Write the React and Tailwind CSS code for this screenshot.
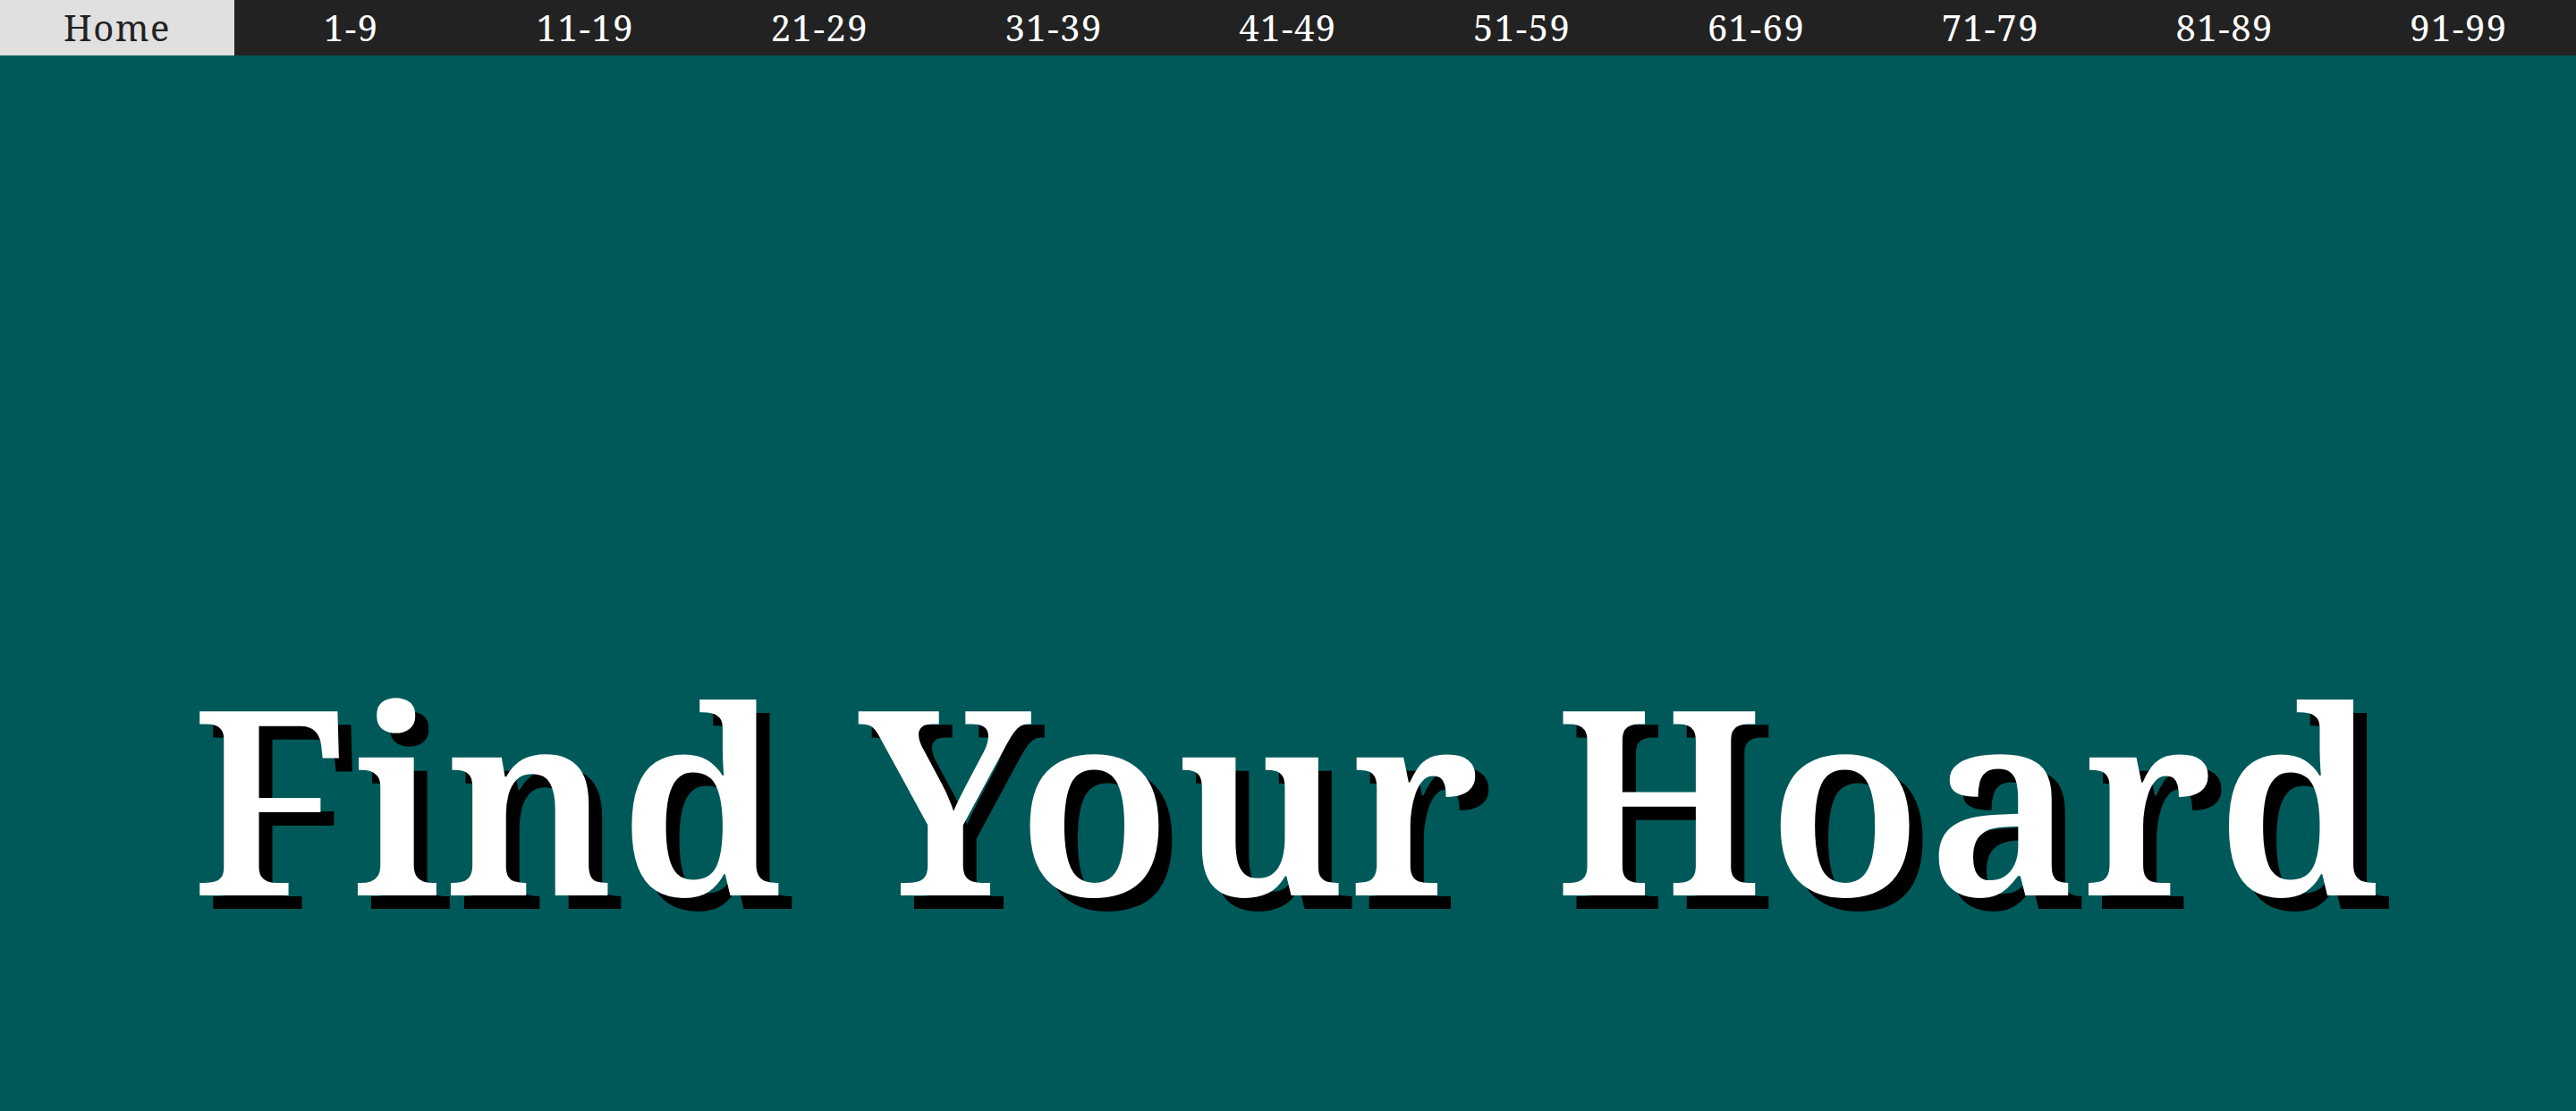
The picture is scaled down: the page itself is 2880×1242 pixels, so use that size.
import React from "react";

const ranges = ["1-9", "11-19", "21-29", "31-39", "41-49", "51-59", "61-69", "71-79", "81-89", "91-99"];

const App = () => {
  return (
    <div className="min-h-screen bg-[#005959] font-['Noto_Serif',serif]">
      {/* top nav */}
      <nav className="flex h-[62px] bg-[#222222]">
        <a className="flex flex-1 items-center justify-center bg-[#e0e0e0] text-[40px] tracking-[1.5px] text-[#222222]">
          Home
        </a>
        {ranges.map((r) => (
          <a key={r} className="flex flex-1 items-center justify-center text-[40px] tracking-[1.5px] text-white">
            {r}
          </a>
        ))}
      </nav>

      <section className="flex justify-center pt-[683px]">
        <h1 className="text-[288px] leading-none tracking-[5px] text-white [font-weight:560] [text-shadow:15px_15px_0_#000]">
          Find Your Hoard
        </h1>
      </section>
    </div>
  );
};

export default App;
